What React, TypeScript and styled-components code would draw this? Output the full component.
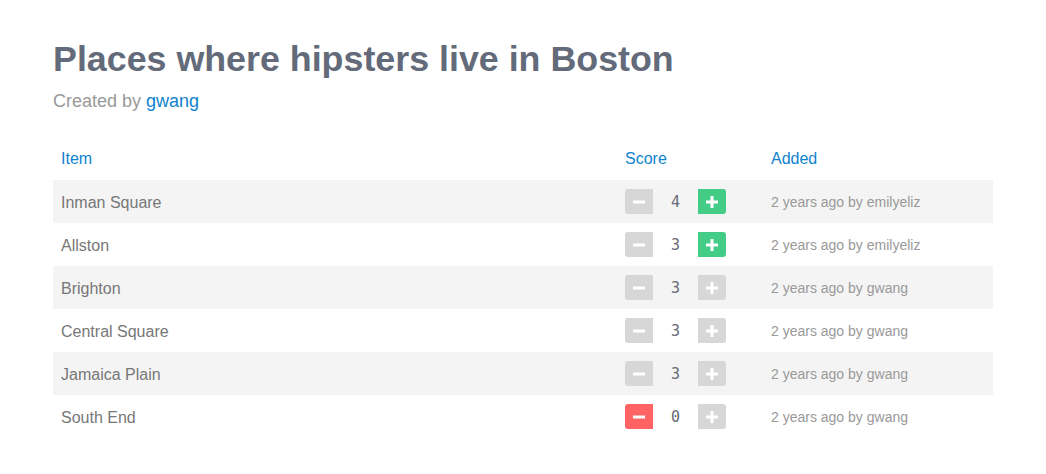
import React from "react";
import styled, { createGlobalStyle } from "styled-components";

const Global = createGlobalStyle`
  html, body { margin: 0; padding: 0; background: #ffffff; }
  body { font-family: "Liberation Sans", Arial, sans-serif; }
`;

const Page = styled.div`
  padding: 37px 53px 0 53px;
  width: 940px;
`;

const Title = styled.h1`
  margin: 0;
  font-size: 35.8px;
  line-height: 44px;
  font-weight: 700;
  color: #636a7a;
`;

const Byline = styled.div`
  margin-top: 9px;
  font-size: 18px;
  line-height: 22px;
  color: #999999;
`;

const Link = styled.a`
  color: #0e83cd;
  text-decoration: none;
`;

const Table = styled.div`
  margin-top: 26px;
  display: grid;
  grid-template-columns: 564px 146px 1fr;
`;

const Row = styled.div<{ $striped?: boolean; $header?: boolean }>`
  display: contents;
  & > div {
    height: ${(p) => (p.$header ? "42px" : "43px")};
    background: ${(p) => (p.$striped ? "#f4f4f4" : "transparent")};
  }
`;

const Cell = styled.div<{ $kind: "head" | "item" | "added" | "score" }>`
  display: flex;
  align-items: center;
  padding-left: 8px;
  padding-top: ${(p) => (p.$kind === "item" ? "2px" : p.$kind === "added" ? "1px" : "0")};
  box-sizing: border-box;
  font-size: ${(p) => (p.$kind === "added" ? "14px" : "16px")};
  color: ${(p) =>
    p.$kind === "head" ? "#0e83cd" : p.$kind === "added" ? "#999999" : "#777777"};
`;

const Btn = styled.button<{ $tone: "gray" | "green" | "red"; $side: "left" | "right" }>`
  width: 28px;
  height: 25px;
  border: none;
  padding: 0;
  display: flex;
  align-items: center;
  justify-content: center;
  background: ${(p) =>
    p.$tone === "green" ? "#43cc86" : p.$tone === "red" ? "#ff6363" : "#d7d7d7"};
  border-radius: ${(p) => (p.$side === "left" ? "3px 0 0 3px" : "0 3px 3px 0")};
  cursor: pointer;
`;

const Count = styled.span`
  width: 45px;
  text-align: center;
  font-family: "DejaVu Sans Mono", "Liberation Mono", monospace;
  font-size: 15px;
  color: #666b74;
`;

const Minus = () => (
  <svg width="12" height="12" viewBox="0 0 12 12">
    <rect x="0" y="4.5" width="12" height="3" fill="#fff" />
  </svg>
);

const Plus = () => (
  <svg width="12" height="12" viewBox="0 0 12 12">
    <rect x="0" y="4.5" width="12" height="3" fill="#fff" />
    <rect x="4.5" y="0" width="3" height="12" fill="#fff" />
  </svg>
);

type Entry = { name: string; score: number; by: string; up: boolean; down: boolean };

const data: Entry[] = [
  { name: "Inman Square", score: 4, by: "emilyeliz", up: true, down: false },
  { name: "Allston", score: 3, by: "emilyeliz", up: true, down: false },
  { name: "Brighton", score: 3, by: "gwang", up: false, down: false },
  { name: "Central Square", score: 3, by: "gwang", up: false, down: false },
  { name: "Jamaica Plain", score: 3, by: "gwang", up: false, down: false },
  { name: "South End", score: 0, by: "gwang", up: false, down: true },
];

export default function App() {
  return (
    <>
      <Global />
      <Page>
        <Title>Places where hipsters live in Boston</Title>
        <Byline>
          Created by <Link href="#">gwang</Link>
        </Byline>
        <Table>
          <Row $header>
            <Cell $kind="head">Item</Cell>
            <Cell $kind="head">Score</Cell>
            <Cell $kind="head">Added</Cell>
          </Row>
          {data.map((d, i) => (
            <Row key={d.name} $striped={i % 2 === 0}>
              <Cell $kind="item">{d.name}</Cell>
              <Cell $kind="score">
                <Btn $tone={d.down ? "red" : "gray"} $side="left">
                  <Minus />
                </Btn>
                <Count>{d.score}</Count>
                <Btn $tone={d.up ? "green" : "gray"} $side="right">
                  <Plus />
                </Btn>
              </Cell>
              <Cell $kind="added">2 years ago by {d.by}</Cell>
            </Row>
          ))}
        </Table>
      </Page>
    </>
  );
}
